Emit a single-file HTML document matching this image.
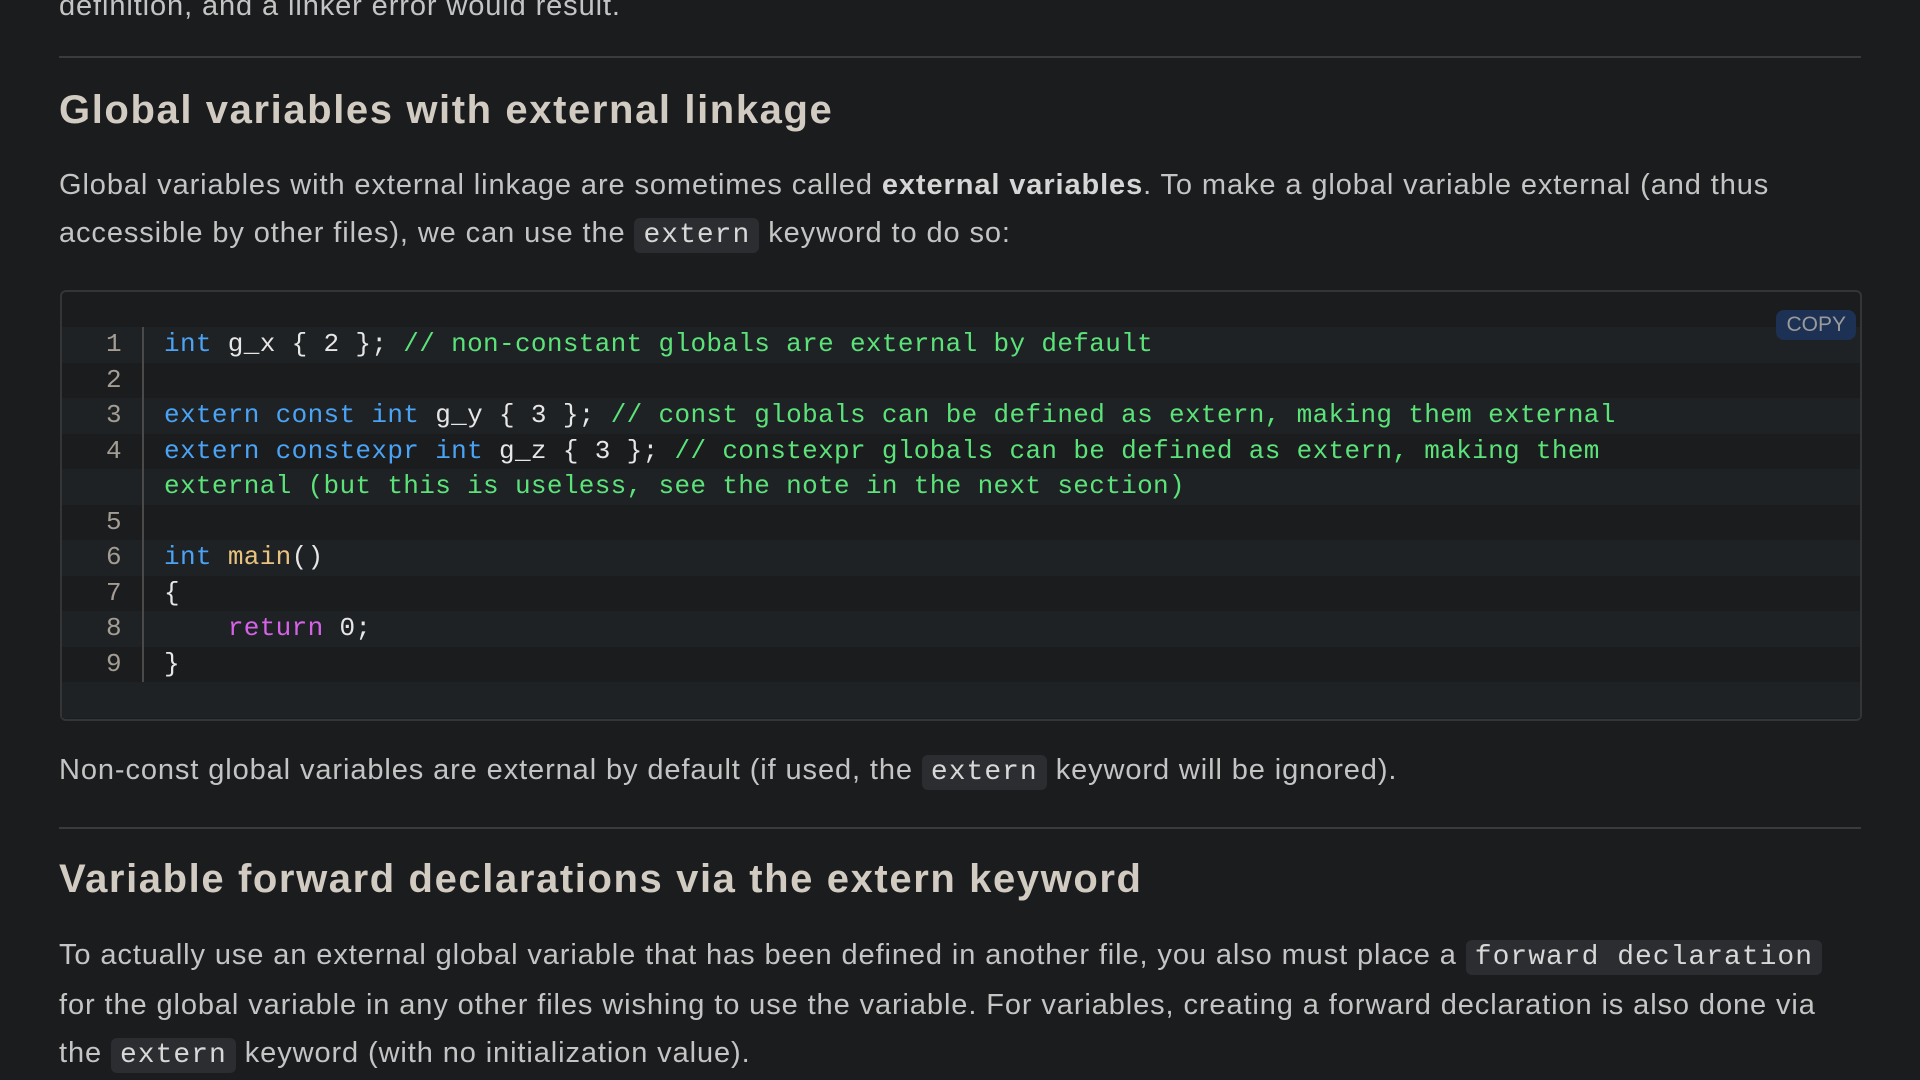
<!DOCTYPE html>
<html><head><meta charset="utf-8"><style>
body{margin:0;background:#1b1c1e;width:1920px;height:1080px;overflow:hidden;font-family:"Liberation Sans",sans-serif;color:#c4c4c4;position:relative}
.a{position:absolute;left:59px;white-space:nowrap}
p.a{margin:0;font-size:29px;line-height:48px;letter-spacing:0.9px}
h2.a{margin:0;font-size:40px;font-weight:bold;color:#d2cbc2;line-height:48px;letter-spacing:1.6px}
hr.a{margin:0;border:0;border-top:2px solid #3a3b3d;width:1802px}
code{font-family:"Liberation Mono",monospace;background:#2b2d30;border-radius:6px;padding:2px 9px;font-size:28px;letter-spacing:1px;color:#d8d8d8}
.blk{position:absolute;left:60px;top:290px;width:1798px;height:427px;border:2px solid #333537;border-radius:6px;background:#1b1c1e}
.lines{position:absolute;top:35px;left:0;right:0;font-family:"Liberation Mono",monospace;font-size:26px;letter-spacing:0.35px}
.l{height:35.5px;line-height:35.5px;position:relative;white-space:pre;color:#e6e6e6}
.l:nth-child(even){background:#1f2224}
.n{position:absolute;left:0;width:60px;text-align:right;color:#a39d94}
.c{position:absolute;left:102px}
.g{position:absolute;left:80px;top:0;border-left:2px solid #4a4a4a;z-index:2}
.k{color:#4aa3f5}.m{color:#5be37a}.f{color:#e9c27f}.r{color:#d662e8}
.copy{position:absolute;right:4px;top:18px;background:#1d3155;color:#9a9a9a;font-size:21px;padding:3px 10px;border-radius:8px;z-index:5}
</style></head><body>
<p class="a" style="top:-18px">definition, and a linker error would result.</p>
<hr class="a" style="top:56px">
<h2 class="a" style="top:86px">Global variables with external linkage</h2>
<p class="a" style="top:161px">Global variables with external linkage are sometimes called <b style="color:#d6d6d6">external variables</b>. To make a global variable external (and thus</p>
<p class="a" style="top:209px">accessible by other files), we can use the <code>extern</code> keyword to do so:</p>
<div class="blk">
<div class="copy">COPY</div>
<div class="lines">
<div class="g" style="height:355px"></div>
<div class="l"><span class="n">1</span><span class="c"><span class="k">int</span> g_x { 2 }; <span class="m">// non-constant globals are external by default</span></span></div>
<div class="l"><span class="n">2</span></div>
<div class="l"><span class="n">3</span><span class="c"><span class="k">extern const int</span> g_y { 3 }; <span class="m">// const globals can be defined as extern, making them external</span></span></div>
<div class="l"><span class="n">4</span><span class="c"><span class="k">extern constexpr int</span> g_z { 3 }; <span class="m">// constexpr globals can be defined as extern, making them</span></span></div>
<div class="l"><span class="c m">external (but this is useless, see the note in the next section)</span></div>
<div class="l"><span class="n">5</span></div>
<div class="l"><span class="n">6</span><span class="c"><span class="k">int</span> <span class="f">main</span>()</span></div>
<div class="l"><span class="n">7</span><span class="c">{</span></div>
<div class="l"><span class="n">8</span><span class="c">    <span class="r">return</span> 0;</span></div>
<div class="l"><span class="n">9</span><span class="c">}</span></div>
<div class="l"></div>
</div>
</div>
<p class="a" style="top:746px">Non-const global variables are external by default (if used, the <code>extern</code> keyword will be ignored).</p>
<hr class="a" style="top:827px">
<h2 class="a" style="top:855px">Variable forward declarations via the extern keyword</h2>
<p class="a" style="top:931px">To actually use an external global variable that has been defined in another file, you also must place a <code>forward declaration</code></p>
<p class="a" style="top:981px">for the global variable in any other files wishing to use the variable. For variables, creating a forward declaration is also done via</p>
<p class="a" style="top:1029px">the <code>extern</code> keyword (with no initialization value).</p>
</body></html>
